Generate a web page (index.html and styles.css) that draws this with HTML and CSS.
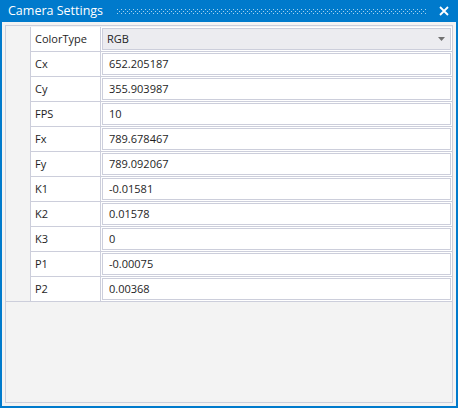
FILE: index.html
```html
<!DOCTYPE html>
<html>
<head>
<meta charset="utf-8">
<link rel="stylesheet" href="styles.css">
</head>
<body>
<div class="window">
  <div class="titlebar">
    <span class="title">Camera Settings</span>
    <svg class="grip" height="5" preserveAspectRatio="none">
      <defs>
        <pattern id="dots" width="4" height="4" patternUnits="userSpaceOnUse">
          <rect x="0" y="0" width="1" height="1" fill="#a6d2ee"/>
          <rect x="2" y="2" width="1" height="1" fill="#a6d2ee"/>
        </pattern>
      </defs>
      <rect width="100%" height="5" fill="url(#dots)"/>
    </svg>
    <svg class="close" width="10" height="10" viewBox="0 0 10 10"><path d="M1 1 L9 9 M9 1 L1 9" stroke="#fff" stroke-width="1.8" fill="none"/></svg>
  </div>
  <div class="body">
    <div class="panel">
      <div class="grid">
        <div class="row"><div class="gut"></div><div class="name">ColorType</div><div class="val"><div class="box combo"><span>RGB</span><svg class="arrow" width="7" height="4" viewBox="0 0 7 4"><path d="M0 0 H7 L3.5 4 Z" fill="#717171"/></svg></div></div></div>
        <div class="row"><div class="gut"></div><div class="name">Cx</div><div class="val"><div class="box">652.205187</div></div></div>
        <div class="row"><div class="gut"></div><div class="name">Cy</div><div class="val"><div class="box">355.903987</div></div></div>
        <div class="row"><div class="gut"></div><div class="name">FPS</div><div class="val"><div class="box">10</div></div></div>
        <div class="row"><div class="gut"></div><div class="name">Fx</div><div class="val"><div class="box">789.678467</div></div></div>
        <div class="row"><div class="gut"></div><div class="name">Fy</div><div class="val"><div class="box">789.092067</div></div></div>
        <div class="row"><div class="gut"></div><div class="name">K1</div><div class="val"><div class="box">-0.01581</div></div></div>
        <div class="row"><div class="gut"></div><div class="name">K2</div><div class="val"><div class="box">0.01578</div></div></div>
        <div class="row"><div class="gut"></div><div class="name">K3</div><div class="val"><div class="box">0</div></div></div>
        <div class="row"><div class="gut"></div><div class="name">P1</div><div class="val"><div class="box">-0.00075</div></div></div>
        <div class="row"><div class="gut"></div><div class="name">P2</div><div class="val"><div class="box">0.00368</div></div></div>
      </div>
    </div>
  </div>
</div>
</body>
</html>
```

FILE: styles.css
```css
html, body { margin: 0; padding: 0; }
body { width: 458px; height: 408px; overflow: hidden; font-family: "Open Sans", "Noto Sans", sans-serif; }
.window {
  width: 458px; height: 408px; box-sizing: border-box;
  border: 2px solid #007acc; border-top: none;
  background: #f3f3f3;
  display: flex; flex-direction: column;
}
.titlebar {
  height: 22px; flex: none; background: #007acc;
  display: flex; align-items: center;
  margin: 0 -2px; padding: 0 0 0 8px;
}
.title { color: #fff; font-size: 12.5px; white-space: nowrap; line-height: 22px; }
.grip { flex: 1; height: 5px; min-width: 0; margin: 0 0 0 14px; display: block; }
.close { margin: 0 9px 0 12px; flex: none; }
.body { flex: 1; padding: 3px; display: flex; }
.panel {
  flex: 1; border: 1px solid #cccedb; background: #f3f3f3;
  padding-top: 1px;
}
.grid { border-bottom: 1px solid #cccedb; }
.row { display: grid; grid-template-columns: 24px 70px 352px; height: 25px; }
.row:last-child { height: 24px; }
.name, .val { border-left: 1px solid #cccedb; border-bottom: 1px solid #cccedb; }
.row:last-child .name, .row:last-child .val { border-bottom: none; }
.name { background: #fff; color: #1e1e1e; font-size: 11px; line-height: 24px; padding-left: 4px; }
.val { background: #fff; padding: 1px; }
.box {
  height: 22px; box-sizing: border-box; border: 1px solid #cccedb;
  font-size: 11px; line-height: 20px; color: #1e1e1e; padding-left: 6px;
}
.combo { background: #ececf0; padding-left: 4px; display: flex; align-items: center; justify-content: space-between; padding-right: 5px; }
.arrow { display: block; }
```
